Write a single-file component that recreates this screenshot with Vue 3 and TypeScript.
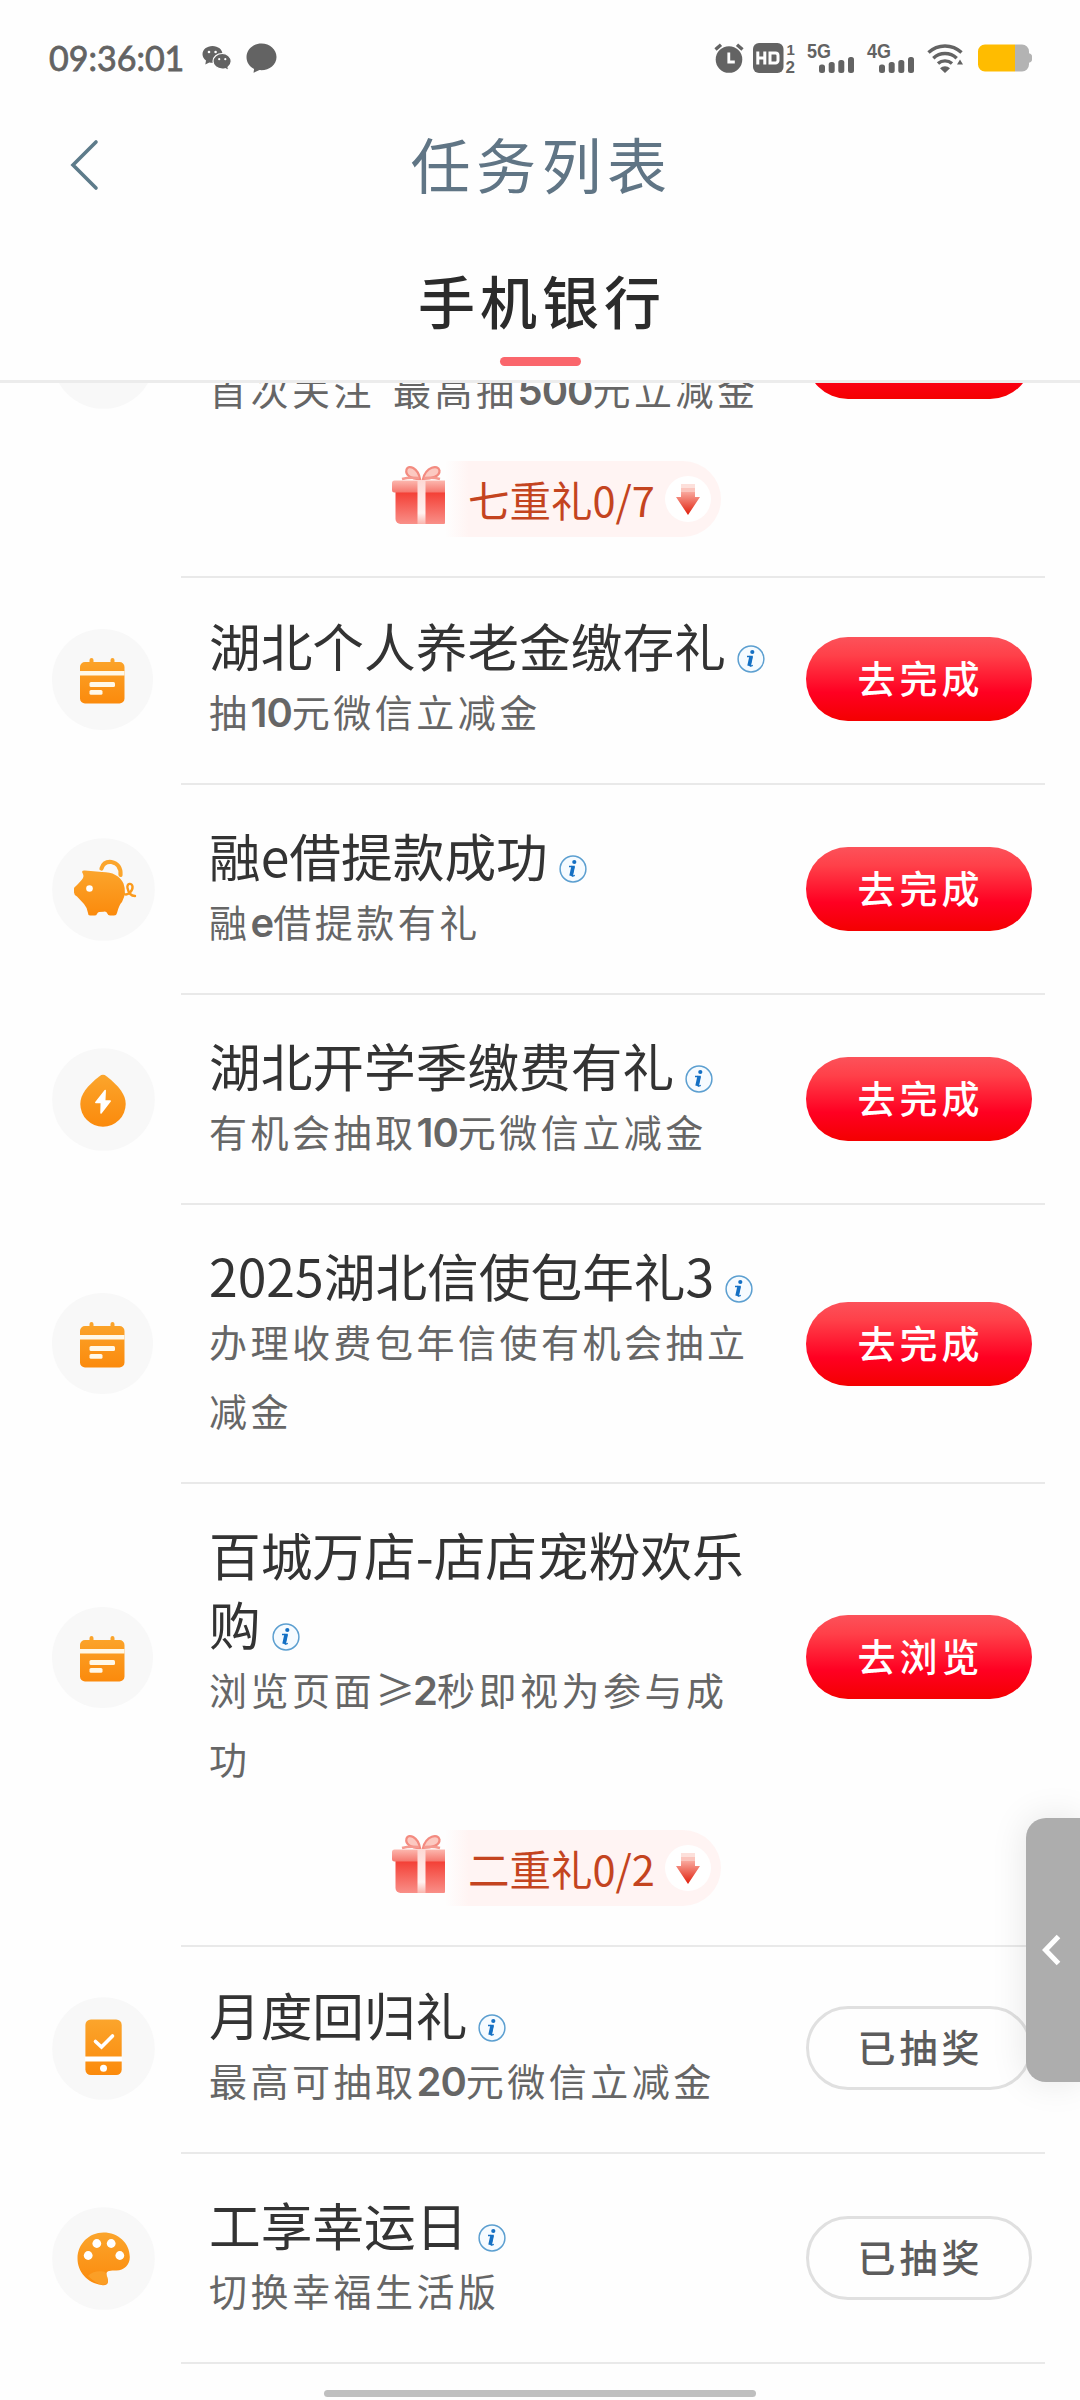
<script setup lang="ts">
type IconName = 'calendar' | 'pig' | 'drop' | 'phone' | 'palette' | 'blank'

interface Task {
  icon: IconName
  title: string[]
  desc: string[]
  action: string
  done?: boolean
}

interface Group {
  tasks: Task[]
  gift?: string
}

const groups: Group[] = [
  {
    tasks: [
      { icon: 'blank', title: [], desc: ['首次关注 最高抽500元立减金'], action: '去完成' },
    ],
    gift: '七重礼0/7',
  },
  {
    tasks: [
      { icon: 'calendar', title: ['湖北个人养老金缴存礼'], desc: ['抽10元微信立减金'], action: '去完成' },
      { icon: 'pig', title: ['融e借提款成功'], desc: ['融e借提款有礼'], action: '去完成' },
      { icon: 'drop', title: ['湖北开学季缴费有礼'], desc: ['有机会抽取10元微信立减金'], action: '去完成' },
      { icon: 'calendar', title: ['2025湖北信使包年礼3'], desc: ['办理收费包年信使有机会抽立', '减金'], action: '去完成' },
      { icon: 'calendar', title: ['百城万店-店店宠粉欢乐', '购'], desc: ['浏览页面≥2秒即视为参与成', '功'], action: '去浏览' },
    ],
    gift: '二重礼0/2',
  },
  {
    tasks: [
      { icon: 'phone', title: ['月度回归礼'], desc: ['最高可抽取20元微信立减金'], action: '已抽奖', done: true },
      { icon: 'palette', title: ['工享幸运日'], desc: ['切换幸福生活版'], action: '已抽奖', done: true },
    ],
  },
]

type RunKind = 'latin' | 'sign' | 'cjk'

// Splits a line into latin, sign and CJK runs so each can use its own face.
function runs(line: string): { text: string; kind: RunKind }[] {
  return (line.match(/[0-9A-Za-z]+|≥|[^0-9A-Za-z≥]+/g) ?? []).map((text) => ({
    text,
    kind: /^[0-9A-Za-z]/.test(text) ? 'latin' : text === '≥' ? 'sign' : 'cjk',
  }))
}
</script>

<template>
  <div class="screen">
    <svg class="defs" width="0" height="0" aria-hidden="true">
      <defs>
        <linearGradient id="orange" x1="0" y1="0" x2="0" y2="1">
          <stop offset="0" stop-color="#fba52c" />
          <stop offset="1" stop-color="#fb8a0c" />
        </linearGradient>
        <linearGradient id="box" x1="0" y1="0" x2="0" y2="1">
          <stop offset="0" stop-color="#f3392f" />
          <stop offset="1" stop-color="#f98f88" />
        </linearGradient>
        <linearGradient id="lid" x1="0" y1="0" x2="0" y2="1">
          <stop offset="0" stop-color="#fcb7ae" />
          <stop offset="1" stop-color="#f5766d" />
        </linearGradient>
        <linearGradient id="ribbon" x1="0" y1="0" x2="0" y2="1">
          <stop offset="0" stop-color="#fdd9d5" />
          <stop offset="0.75" stop-color="#fff3f1" />
          <stop offset="1" stop-color="#fab5ae" />
        </linearGradient>
        <linearGradient id="arrow" x1="0" y1="0" x2="0" y2="1">
          <stop offset="0" stop-color="#f9a79c" />
          <stop offset="1" stop-color="#e01f0c" />
        </linearGradient>
      </defs>
    </svg>

    <header class="status">
      <span class="time">09:36:01</span>
      <svg class="wechat" width="30" height="26" viewBox="0 0 30 26" fill="#636363">
        <path d="M10.500 1C4.800 1 .5 4.600 .5 9.200c0 2.600 1.400 4.800 3.500 6.300L3.300 19.500l4-2.100c1 .3 2.100 .4 3.200 .4 5.600 0 10-3.800 10-8.600C20.500 4.600 16.100 1 10.500 1z" />
        <path d="M20.300 8.500c-5.200 0-9.300 3.500-9.300 7.800s4.100 7.800 9.300 7.800c1 0 2-.1 2.900-.4l3.600 1.900-.8-3.300c2-1.400 3.200-3.600 3.200-6 0-4.300-4-7.800-8.900-7.800z" stroke="#fff" stroke-width="1.200" />
        <g fill="#fff"><circle cx="7" cy="7" r="1.300" /><circle cx="13.600" cy="7" r="1.300" /><circle cx="17.200" cy="14.200" r="1.100" /><circle cx="23.300" cy="14.200" r="1.100" /></g>
      </svg>
      <svg class="bubble" width="31" height="30" viewBox="0 0 31 30" fill="#636363">
        <path d="M15.500 .5C7.200 .5 .5 6.500 .5 14c0 5.600 3.300 9.900 7.600 12L7.500 29.800l6-2.700c9.200 .8 17-4.800 17-13.100C30.500 6.500 23.800 .5 15.500 .5z" />
      </svg>

      <div class="indicators">
        <svg width="30" height="32" viewBox="0 0 30 32">
          <circle cx="15" cy="17.500" r="13.300" fill="#636363" />
          <path d="M1.500 7.500 7 2.800M28.500 7.500 23 2.800" stroke="#636363" stroke-width="3.400" fill="none" />
          <path d="M14.800 10.500v9.500h6" stroke="#fff" stroke-width="2.800" fill="none" />
        </svg>
        <svg class="hd" width="44" height="32" viewBox="0 0 44 32">
          <rect x="0" y="1" width="30.500" height="30" rx="6" fill="#636363" />
          <path d="M4.800 9.500v13M11.800 9.500v13M4.800 16h7M17 11h5.500a2.500 2.500 0 0 1 2.500 2.500v5a2.500 2.500 0 0 1-2.500 2.500H17z" stroke="#fff" stroke-width="3" fill="none" />
          <text x="33.500" y="12.500" font-size="15">1</text>
          <text x="32.500" y="31" font-size="17">2</text>
        </svg>
        <svg class="cell" width="50" height="32" viewBox="0 0 50 32">
          <text x="0" y="16" font-size="20" textLength="24" lengthAdjust="spacingAndGlyphs">5G</text>
          <g fill="#636363"><rect x="12" y="22.500" width="6" height="8.500" rx="2.500" /><rect x="21.700" y="20" width="6" height="11" rx="2.500" /><rect x="31.300" y="18" width="6" height="13" rx="2.500" /><rect x="41" y="15" width="6" height="16" rx="2.500" /></g>
        </svg>
        <svg class="cell" width="50" height="32" viewBox="0 0 50 32">
          <text x="0" y="16" font-size="20" textLength="24" lengthAdjust="spacingAndGlyphs">4G</text>
          <g fill="#636363"><rect x="12" y="22.500" width="6" height="8.500" rx="2.500" /><rect x="21.700" y="20" width="6" height="11" rx="2.500" /><rect x="31.300" y="18" width="6" height="13" rx="2.500" /><rect x="41" y="15" width="6" height="16" rx="2.500" /></g>
        </svg>
        <svg class="wifi" width="36" height="32" viewBox="0 0 36 32">
          <g fill="none" stroke="#636363" stroke-width="3.400">
            <path d="M1.500 10.500a24 24 0 0 1 33 0" />
            <path d="M6.300 16.200a17 17 0 0 1 23.400 0" />
            <path d="M11 21.500a10.500 10.500 0 0 1 14 0" />
          </g>
          <path d="M13 26.200a7.500 7.500 0 0 1 10 0L18 31zM33 17.500l3 5h-6z" fill="#636363" />
        </svg>
        <svg class="battery" width="54" height="28" viewBox="0 0 54 28">
          <path d="M37 .5h7a7 7 0 0 1 7 7v1.800c2 .5 3 1.500 3 3.200v3c0 1.700-1 2.700-3 3.200v1.800a7 7 0 0 1-7 7h-7z" fill="#b3b3b3" />
          <path d="M7 .5h30v27H7a7 7 0 0 1-7-7v-13a7 7 0 0 1 7-7z" fill="#ffbc00" />
        </svg>
      </div>
    </header>

    <nav class="topbar">
      <svg class="back" width="30" height="52" viewBox="0 0 30 52" fill="none" stroke="#5d7b8a" stroke-width="3.600" stroke-linecap="round">
        <path d="M26 3 3 26l23 23" />
      </svg>
      <h1>任务列表</h1>
    </nav>

    <div class="tabs">
      <span class="tab">手机银行</span>
      <i class="tab-bar"></i>
    </div>

    <main class="viewport">
      <div class="list">
        <section v-for="(group, g) in groups" :key="g" class="group">
          <template v-for="(task, t) in group.tasks" :key="t">
            <article class="row">
              <svg class="task-icon" width="103" height="103" viewBox="0 0 103 103">
                <circle v-if="task.icon === 'calendar'" cx="50.500" cy="51.500" r="50.500" fill="#f8f8f8" />
                <circle v-else cx="51.500" cy="51.500" r="51.300" fill="#f8f8f8" />
                <g v-if="task.icon === 'calendar'">
                  <path d="M33 34h4.500v-2a2 2 0 0 1 4 0v2h17v-2a2 2 0 0 1 4 0v2H67.500a5 5 0 0 1 5 5V70.500a5 5 0 0 1-5 5H33a5 5 0 0 1-5-5V39a5 5 0 0 1 5-5z" fill="url(#orange)" />
                  <path d="M28 43h44.500v4.500H28z" fill="#fff8e8" />
                  <rect x="37.500" y="54" width="25.500" height="5" rx="1.500" fill="#fff8e8" />
                  <rect x="37.500" y="62" width="13" height="4.800" rx="1.500" fill="#fff8e8" />
                </g>
                <g v-else-if="task.icon === 'pig'">
                  <path d="M49.500 30.500C51 25.500 55 23.500 59.500 24c6 1 9.500 6 9 13" fill="none" stroke="#fba52c" stroke-width="4.200" stroke-linecap="round" />
                  <path d="M31 36Q28.500 32 33 32.500L50 34Q66 34 71.500 45.500 75 55 70 64 67 67 65 75 64.500 77.500 62 77.500H58Q56 77.500 55.300 75.500 54.500 73 51.500 73.700L47 74Q45.500 74.300 45 76 44.500 77.500 42.500 77.500H38Q36 77.500 36 75 35.500 70 32 66L25 58.500Q22 57 22 54.500V50.500Q22 49 24 48 29 43 31 40 32 38 31 36z" fill="url(#orange)" />
                  <circle cx="37.500" cy="50.500" r="3.300" fill="#fff" />
                  <path d="M72 56c4 2 9-3 8.500-7.500-.5-4-6-3.500-5 1.500 .8 4 3 8 7.500 8" fill="none" stroke="#fb9a1c" stroke-width="2.400" stroke-linecap="round" />
                </g>
                <g v-else-if="task.icon === 'drop'">
                  <path d="M47.500 28.200Q51 25.500 54.500 28.200C67 38 73.700 46.500 73.700 56A22.700 22.700 0 0 1 28.300 56C28.300 46.500 35 38 47.500 28.200z" fill="url(#orange)" />
                  <path d="M53.200 42.500 43.800 54.500h5.500l-.3 10.500L58.200 53h-5.500z" fill="#fff" stroke="#fff" stroke-width="1.500" stroke-linejoin="round" />
                </g>
                <g v-else-if="task.icon === 'phone'">
                  <rect x="33.400" y="22.500" width="36.300" height="55.500" rx="5.500" fill="url(#orange)" />
                  <path d="M33 59.500h37v5H33z" fill="#fff" />
                  <path d="M43.500 44.500l6 5.500 11-11" fill="none" stroke="#fff" stroke-width="3.600" stroke-linecap="round" />
                  <circle cx="51.500" cy="71.300" r="3.500" fill="#fff" />
                </g>
                <g v-else-if="task.icon === 'palette'">
                  <path d="M51.500 25.500C66 25.500 77.800 36 77.800 50 77.800 58 72 63.500 64.500 63.500 58.500 63.500 54.500 63.500 54.500 67 54.500 70 56.500 71.500 56 75 55.600 78.500 52 78.500 49.500 78 35.500 76 25.500 65 25.500 51.500 25.500 37 37 25.500 51.500 25.500z" fill="url(#orange)" />
                  <path d="M36 69q5-6 16-4.500 2.500 1 3.500 6.500 2 7-5 7-7-1.500-14.500-9z" fill="#fbaa35" opacity="0.600" />
                  <g fill="#fff"><circle cx="36.200" cy="48.500" r="4.400" /><circle cx="44.800" cy="36.500" r="4.400" /><circle cx="59.200" cy="36.500" r="4.400" /><circle cx="67.800" cy="48.500" r="4.400" /></g>
                </g>
              </svg>

              <div class="body">
                <div v-if="!task.title.length" class="title"></div>
                <div v-for="(line, i) in task.title" :key="'t' + i" class="title">
                  <span>{{ line }}</span>
                  <svg v-if="i === task.title.length - 1" class="info" width="28" height="28" viewBox="0 0 28 28">
                    <circle cx="14" cy="14" r="12.900" fill="#f6fbff" stroke="#5c9fd0" stroke-width="1.500" />
                    <circle cx="15.300" cy="7" r="2.100" fill="#1470c4" />
                    <path d="M10 11.500h5l-2 8.600q-.2 1 .8 .9l2-.6" fill="none" stroke="#1470c4" stroke-width="1.300" />
                    <path d="M14.200 11.200 12.100 21" stroke="#1470c4" stroke-width="3.600" fill="none" />
                  </svg>
                </div>
                <div v-for="(line, i) in task.desc" :key="'d' + i" class="desc">
                  <span v-for="(run, r) in runs(line)" :key="r" :class="run.kind">{{ run.text }}</span>
                </div>
              </div>

              <button class="action" :class="{ done: task.done }">{{ task.action }}</button>
            </article>
            <div v-if="!group.gift || t < group.tasks.length - 1" class="divider"></div>
          </template>

          <template v-if="group.gift">
            <div class="gift">
              <svg class="gift-box" width="60" height="62" viewBox="0 0 60 62">
                <g fill="#fcc9c1" stroke="#f38b80" stroke-width="2.200">
                  <path d="M29 15C20 15 14 11 15.500 5.500 17.500 0 27 4 29 15z" />
                  <path d="M32 15c9 0 17-3 16.500-8.500C47 0 35 3 32 15z" />
                </g>
                <path d="M28 14q-10-1-17 1M33 14q9-1 16 1" stroke="#f59a90" stroke-width="2.500" fill="none" />
                <path d="M4.500 26h53v29a5 5 0 0 1-5 5h-43a5 5 0 0 1-5-5z" fill="url(#box)" />
                <rect x="1" y="16.500" width="58" height="12" rx="2.500" fill="url(#lid)" />
                <rect x="26.500" y="16.500" width="8" height="43.500" fill="url(#ribbon)" />
              </svg>
              <div class="pill">
                <span>{{ group.gift }}</span>
                <i class="dot">
                  <svg width="26" height="33" viewBox="0 0 26 33">
                    <rect x="6" y="1" width="14" height="4" fill="#fde0db" />
                    <rect x="6" y="5" width="14" height="4" fill="#fbc5bd" />
                    <path d="M6 9h14v5h5L13 32 1 14h5z" fill="url(#arrow)" />
                  </svg>
                </i>
              </div>
            </div>
            <div class="divider"></div>
          </template>
        </section>
      </div>
    </main>

    <aside class="drawer">
      <svg width="20" height="32" viewBox="0 0 20 32" fill="none" stroke="#fff" stroke-width="5">
        <path d="M17.500 2.500 4.500 16l13 13.500" />
      </svg>
    </aside>
    <div class="home"></div>
  </div>
</template>

<style>
body {
  margin: 0;
  background: #fefefe;
}
</style>

<style scoped>
.screen {
  position: relative;
  display: flex;
  flex-direction: column;
  width: 1080px;
  height: 2400px;
  overflow: hidden;
  background: #fefefe;
  font-family: "Noto Sans CJK SC", sans-serif;
  color: #333;
}
.defs {
  position: absolute;
}
svg {
  display: block;
  flex: none;
  overflow: visible;
}
.status {
  display: flex;
  align-items: center;
  box-sizing: border-box;
  height: 116px;
  padding: 0 48px;
}
.time {
  width: 153px;
  padding-left: 1px;
  font: 400 34px/40px Lato, sans-serif;
  color: #636363;
  -webkit-text-stroke: 0.8px #636363;
  white-space: nowrap;
}
.bubble {
  margin-left: 14px;
}
.indicators {
  display: flex;
  align-items: center;
  margin-left: auto;
}
.indicators text {
  font-family: "Liberation Sans", sans-serif;
  font-weight: 700;
  fill: #636363;
}
.hd {
  margin-left: 9px;
}
.cell {
  margin-left: 10px;
}
.wifi {
  margin-left: 10px;
}
.battery {
  margin-left: 15px;
}
.topbar {
  display: flex;
  align-items: flex-start;
  justify-content: center;
  height: 98px;
  position: relative;
}
.back {
  position: absolute;
  left: 70px;
  top: 23px;
}
h1 {
  margin: 0;
  padding-left: 3px;
  font-size: 60px;
  line-height: 94px;
  font-weight: 400;
  letter-spacing: 5.5px;
  color: #607585;
}
.tabs {
  display: flex;
  flex-direction: column;
  align-items: center;
  box-sizing: border-box;
  height: 169px;
  padding-top: 41px;
  border-bottom: 3px solid #ececec;
}
.tab {
  padding-left: 4px;
  font-size: 57px;
  line-height: 88px;
  font-weight: 500;
  letter-spacing: 5px;
  color: #2b2b2b;
}
.tab-bar {
  width: 81px;
  height: 9px;
  margin-top: 14px;
  border-radius: 5px;
  background: #fa666c;
}
.viewport {
  flex: 1;
  overflow: hidden;
}
.list {
  margin-top: -130px;
}
.row {
  display: flex;
  align-items: center;
  padding: 35px 48px 35px 52px;
}
.group + .group .row:first-child {
  padding-top: 32px;
}
.body {
  width: 596px;
  margin-left: 54px;
  margin-right: 1px;
}
.title {
  display: flex;
  align-items: center;
  height: 69px;
  font-size: 51.700px;
  line-height: 69px;
  font-weight: 400;
  white-space: nowrap;
}
.info {
  margin: 29px 0 0 11px;
}
.desc {
  height: 69px;
  font-size: 38px;
  line-height: 63px;
  letter-spacing: 3.500px;
  word-spacing: 6px;
  color: #666;
  white-space: pre;
}
.latin {
  font-family: Inter, sans-serif;
  font-size: 40px;
  font-weight: 600;
  letter-spacing: -1px;
  line-height: 60px;
}
.sign {
  font-size: 40px;
  line-height: 60px;
  letter-spacing: -2px;
}
.action {
  flex: none;
  box-sizing: border-box;
  width: 226px;
  height: 84px;
  padding: 0 0 0 3px;
  border: 0;
  border-radius: 42px;
  background: linear-gradient(180deg, #fc525a 0%, #ff4049 22%, #ff0022 66%, #f40000 100%);
  font: 500 38px/80px "Noto Sans CJK SC", sans-serif;
  letter-spacing: 4px;
  color: #fff;
  display: flex;
  align-items: flex-start;
  justify-content: center;
}
.action.done {
  border: 3px solid #e0e0e0;
  background: #fefefe;
  line-height: 74px;
  color: #5c5c5c;
}
.divider {
  height: 2px;
  margin: 0 35px 0 181px;
  background: #e9e9e9;
}
.gift {
  display: flex;
  height: 76px;
  margin: 0 0 39px 391px;
}
.gift-box {
  margin-top: 3px;
}
.pill {
  display: flex;
  align-items: center;
  box-sizing: border-box;
  width: 276px;
  margin-left: -6px;
  padding-left: 23px;
  border-radius: 0 38px 38px 0;
  background: linear-gradient(90deg, #fefefe 0, #fff4f3 24px);
  font-size: 41.500px;
  line-height: 76px;
  color: #c4441f;
}
.dot {
  display: flex;
  align-items: center;
  justify-content: center;
  width: 46px;
  height: 46px;
  margin-left: 10px;
  border-radius: 50%;
  background: #fff;
}
.drawer {
  position: absolute;
  right: 0;
  top: 1818px;
  display: flex;
  align-items: center;
  box-sizing: border-box;
  width: 54px;
  height: 264px;
  padding-left: 15px;
  border-radius: 20px 0 0 20px;
  background: #adadad;
  box-shadow: 0 0 36px rgba(0, 0, 0, 0.100);
}
.home {
  position: absolute;
  left: 324px;
  bottom: 3px;
  width: 432px;
  height: 7px;
  border-radius: 4px;
  background: #bfbfbf;
}
</style>
